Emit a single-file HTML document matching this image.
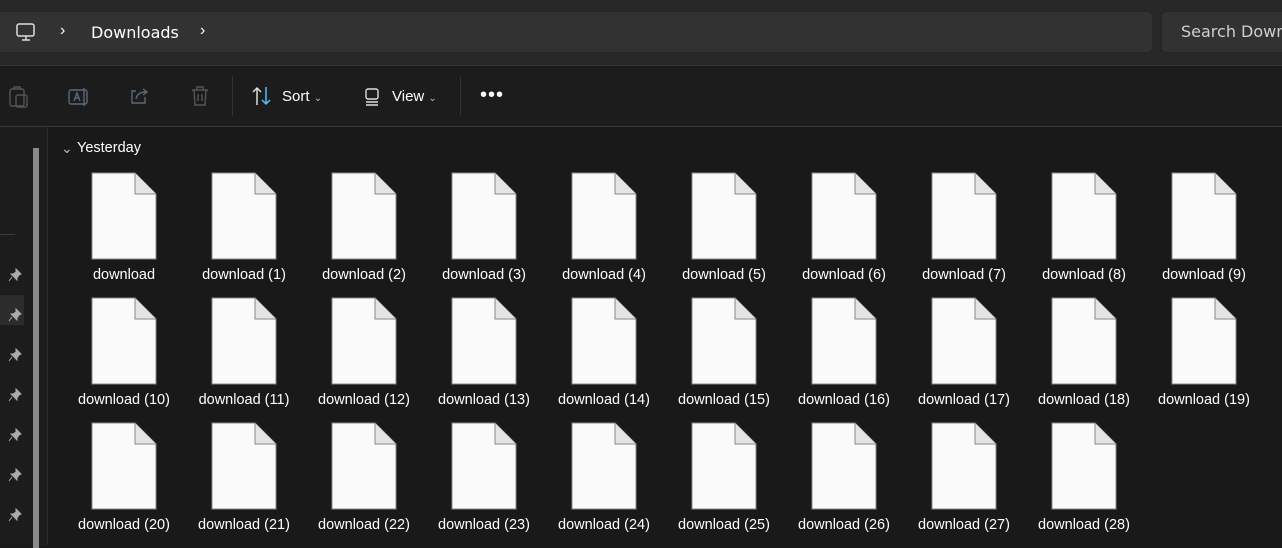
<!DOCTYPE html>
<html><head><style>
*{margin:0;padding:0;box-sizing:border-box}
body{width:1282px;height:545px;overflow:hidden;background:#191919;font-family:"Liberation Sans",sans-serif;position:relative}
.top{position:absolute;left:0;top:0;width:1282px;height:66px;background:#272727;border-bottom:1px solid #353535}
.addr{position:absolute;left:-6px;top:12px;width:1158px;height:40px;background:#323232;border-radius:5px}
.search{position:absolute;left:1162px;top:12px;width:140px;height:40px;background:#323232;border-radius:5px;color:#cfcfcf;line-height:40px;padding-left:19px;white-space:nowrap;font-family:"DejaVu Sans","Liberation Sans",sans-serif;font-size:16px}
.tb{position:absolute;left:0;top:66px;width:1282px;height:61px;background:#1c1c1c;border-bottom:1px solid #3a3a3a}
.t{position:absolute;color:#fff;font-size:15px}
.side{position:absolute;left:0;top:127px;width:48px;height:418px;background:#1c1c1c;border-right:1px solid #2c2c2c}
.f{position:absolute;width:120px;text-align:center;color:#fff;font-size:14.5px}
.f svg{display:block;margin:0 auto}
</style></head><body>
<div class="top">
 <div class="addr"></div>
 <svg style="position:absolute;left:16px;top:23px" width="20" height="18" viewBox="0 0 20 18" fill="none" stroke="#ddd" stroke-width="1.5"><rect x="1" y="1" width="17" height="12" rx="2"/><path d="M6 17h8M10 13v4"/></svg>
 <div class="t" style="left:60px;top:22px;font-size:16px">›</div>
 <div class="t" style="left:91px;top:23px;font-family:'DejaVu Sans',sans-serif;font-size:16px">Downloads</div>
 <div class="t" style="left:200px;top:22px;font-size:16px">›</div>
 <div class="search">Search Downloads</div>
</div>
<div class="tb">
 <svg style="position:absolute;left:8px;top:20px" width="22" height="22" viewBox="0 0 22 22" fill="none" stroke="#555" stroke-width="1.4"><rect x="2" y="3" width="14" height="17" rx="2"/><rect x="8" y="9" width="11" height="12" rx="2"/><path d="M6 3V1h6v2"/></svg>
 <svg style="position:absolute;left:67px;top:20px" width="24" height="22" viewBox="0 0 24 22" fill="none" stroke="#5a6a78" stroke-width="1.4"><rect x="2" y="4" width="18" height="14" rx="2"/><path d="M7 15l3-8 3 8M8 12h4M17 2v18"/></svg>
 <svg style="position:absolute;left:129px;top:19px" width="22" height="22" viewBox="0 0 22 22" fill="none" stroke="#5a6a78" stroke-width="1.4"><path d="M16 12v6H3V6h4"/><path d="M7 14c1-5 5-7 10-7M14 4l4 3-4 3"/></svg>
 <svg style="position:absolute;left:189px;top:19px" width="22" height="22" viewBox="0 0 22 22" fill="none" stroke="#555" stroke-width="1.4"><path d="M3 5h16M8 5V2h6v3M5 5l1 15h10l1-15M9 9v7M13 9v7"/></svg>
 <div style="position:absolute;left:232px;top:10px;width:1px;height:40px;background:#333"></div>
 <svg style="position:absolute;left:251px;top:19px" width="22" height="22" viewBox="0 0 22 22" fill="none" stroke-width="1.5"><path d="M6 20V3M2 7l4-4 4 4" stroke="#ddd"/><path d="M15 2v17M11 15l4 4 4-4" stroke="#4cc2ff"/></svg>
 <div class="t" style="left:282px;top:22px">Sort <span style="font-size:10px;color:#bbb">&#8964;</span></div>
 <svg style="position:absolute;left:363px;top:21px" width="18" height="20" viewBox="0 0 18 20" fill="none" stroke="#ddd" stroke-width="1.4"><rect x="3" y="2" width="12" height="10" rx="2"/><path d="M3 15h12M3 18h12"/></svg>
 <div class="t" style="left:392px;top:22px">View <span style="font-size:10px;color:#bbb">&#8964;</span></div>
 <div style="position:absolute;left:460px;top:10px;width:1px;height:40px;background:#333"></div>
 <div class="t" style="left:480px;top:18px;font-size:20px;letter-spacing:1px">•••</div>
</div>
<div class="side">
 <div style="position:absolute;left:0;top:107px;width:15px;height:1px;background:#3a3a3a"></div>
 <div style="position:absolute;left:0;top:168px;width:24px;height:30px;background:#2c2c2c"></div>
 <div style="position:absolute;left:33px;top:21px;width:6px;height:400px;background:#8a8a8a"></div>
</div>
<div id="pins"></div>
<div class="t" style="left:61px;top:140px;font-size:14px;color:#bbb">&#8964;</div>
<div class="t" style="left:77px;top:140px;font-size:14.5px">Yesterday</div>
<div id="g"></div>
<script>
var p='';for(var i=0;i<7;i++){p+='<svg style="position:absolute;left:8px;top:'+(268+i*40)+'px" width="14" height="14" viewBox="0 0 14 14"><path d="M8 1l5 5-2 1-2 3 0 2-6-6 2 0 3-2z M4 9l-3 4" fill="#aaa" stroke="#aaa" stroke-width="1"/></svg>';}
document.getElementById('pins').innerHTML=p;
var h='';for(var n=0;n<29;n++){var r=Math.floor(n/10),c=n%10;var x=64+c*120,y=172+r*125;
h+='<div class="f" style="left:'+x+'px;top:'+y+'px"><svg width="66" height="88" viewBox="0 0 66 88"><path d="M1 1h43l21 21v65H1z" fill="#fafafa" stroke="#888" stroke-width="1"/><path d="M44 1v21h21" fill="#e4e4e4" stroke="#888" stroke-width="1"/></svg><div style="margin-top:7px">download'+(n?' ('+n+')':'')+'</div></div>';}
document.getElementById('g').innerHTML=h;
</script>
</body></html>
